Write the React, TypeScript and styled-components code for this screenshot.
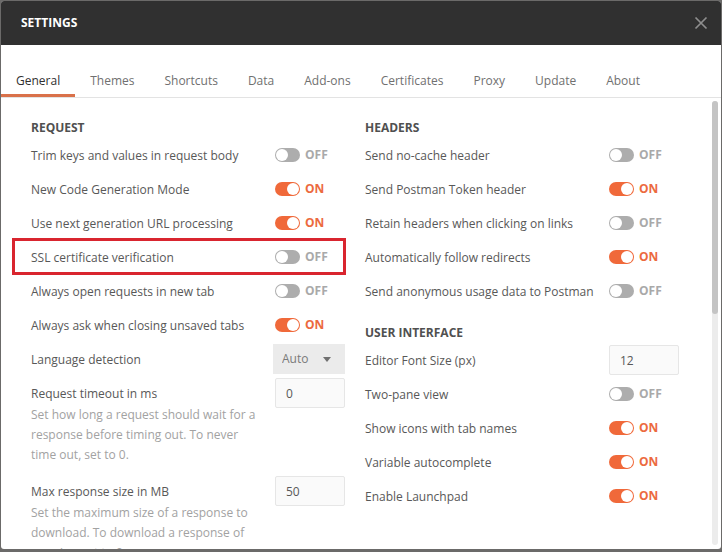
import React, { useId, useState } from "react";
import styled, { createGlobalStyle, css } from "styled-components";

const GlobalStyle = createGlobalStyle`
  *, *::before, *::after { box-sizing: border-box; }
  body {
    margin: 0;
    background: #6b6a69;
    color: #585858;
    font-family: "Open Sans", "Noto Sans", sans-serif;
    font-size: 12px;
    line-height: 20px;
  }
  button, input, select { font: inherit; color: inherit; }
`;

const Backdrop = styled.div`
  display: flex;
  height: 100vh;
  padding: 1px 1px 3px;
`;

const Modal = styled.section`
  display: flex;
  flex: 1;
  flex-direction: column;
  min-width: 0;
  overflow: hidden;
  background: #fff;
  border-radius: 3px;
`;

const ModalHeader = styled.header`
  display: flex;
  flex: none;
  align-items: center;
  justify-content: space-between;
  height: 44px;
  padding: 0 12px 0 20px;
  background: #303030;
`;

const ModalTitle = styled.h1`
  margin: 0;
  color: #fff;
  font-size: 12px;
  font-weight: 700;
`;

const CloseButton = styled.button`
  display: flex;
  padding: 0;
  border: 0;
  background: none;
  color: #8e8e8e;
  cursor: pointer;
`;

const TabBar = styled.nav`
  display: flex;
  flex: none;
  padding-top: 20px;
  border-bottom: 1px solid #e3e3e3;
`;

const Tab = styled.button<{ $active: boolean }>`
  height: 32px;
  padding: 3px 15px 0;
  border: 0;
  border-bottom: 3px solid ${(p) => (p.$active ? "#d9714a" : "transparent")};
  background: none;
  color: ${(p) => (p.$active ? "#303030" : "#707070")};
  cursor: pointer;
`;

const Body = styled.div`
  display: flex;
  flex: 1;
  min-height: 0;
  padding: 3px 3px 4px 0;
`;

const Scroller = styled.div`
  display: grid;
  flex: 1;
  grid-template-columns: 1fr 1fr;
  align-items: start;
  column-gap: 20px;
  height: calc(100% + 4px);
  padding: 17px 33px 0 30px;
  overflow: hidden;
`;

const ScrollTrack = styled.div`
  flex: none;
  width: 6px;
  border-radius: 3px;
  background: #ececec;
`;

const ScrollThumb = styled.div`
  height: 48%;
  border-radius: 3px;
  background: #c4c4c4;
`;

const Column = styled.div`
  display: flex;
  flex-direction: column;
  gap: 15px;
  min-width: 0;
`;

const SectionTitle = styled.h2`
  margin: 0;
  color: #505050;
  font-size: 12px;
  font-weight: 700;
`;

const Row = styled.div<{ $highlighted?: boolean }>`
  position: relative;
  display: grid;
  grid-template-columns: minmax(0, 1fr) 70px;
  align-items: start;
  min-height: 34px;
  ${(p) =>
    p.$highlighted &&
    css`
      &::after {
        content: "";
        position: absolute;
        inset: -2px -1px -1px -19px;
        border: 3px solid #d9252f;
        pointer-events: none;
      }
    `}
`;

const RowText = styled.div`
  padding-top: 8px;
`;

const RowLabel = styled.label`
  display: block;
  white-space: nowrap;
`;

const Description = styled.p`
  margin: 1px 14px 9px 0;
  color: #a2a2a2;
`;

const SwitchCell = styled.div<{ $on: boolean }>`
  display: flex;
  align-items: center;
  gap: 5px;
  height: 34px;
  color: ${(p) => (p.$on ? "#ec6a3e" : "#a9a9a9")};
  font-weight: 700;
`;

const SwitchInput = styled.input`
  display: flex;
  align-items: center;
  width: 25px;
  height: 14px;
  margin: 0;
  padding: 0 1px;
  appearance: none;
  border-radius: 7px;
  background: #adadad;
  cursor: pointer;

  &::before {
    content: "";
    width: 12px;
    height: 12px;
    border-radius: 50%;
    background: #fff;
  }

  &:checked {
    justify-content: flex-end;
    background: #f0693a;
  }
`;

const NumberInput = styled.input`
  width: 100%;
  height: 30px;
  margin-top: 2px;
  padding: 0 10px;
  border: 1px solid #e6e6e6;
  border-radius: 2px;
  background: #fafafa;
`;

const SelectWrap = styled.div`
  position: relative;
  justify-self: end;
  width: 72px;
  margin-top: 2px;
`;

const Select = styled.select`
  display: block;
  width: 100%;
  height: 30px;
  padding: 0 9px;
  appearance: none;
  border: 0;
  border-radius: 0;
  background: #ebebeb;
  color: #7a7a7a;
`;

const Caret = styled.svg`
  position: absolute;
  top: 13px;
  right: 14px;
  pointer-events: none;
`;

type Setting = {
  label: string;
  kind?: "switch" | "number" | "select";
  on?: boolean;
  value?: string;
  description?: string;
  highlighted?: boolean;
};

const requestSettings: Setting[] = [
  { label: "Trim keys and values in request body" },
  { label: "New Code Generation Mode", on: true },
  { label: "Use next generation URL processing", on: true },
  { label: "SSL certificate verification", highlighted: true },
  { label: "Always open requests in new tab" },
  { label: "Always ask when closing unsaved tabs", on: true },
  { label: "Language detection", kind: "select" },
  {
    label: "Request timeout in ms",
    kind: "number",
    value: "0",
    description:
      "Set how long a request should wait for a response before timing out. To never time out, set to 0.",
  },
  {
    label: "Max response size in MB",
    kind: "number",
    value: "50",
    description:
      "Set the maximum size of a response to download. To download a response of any size, set to 0.",
  },
];

const headerSettings: Setting[] = [
  { label: "Send no-cache header" },
  { label: "Send Postman Token header", on: true },
  { label: "Retain headers when clicking on links" },
  { label: "Automatically follow redirects", on: true },
  { label: "Send anonymous usage data to Postman" },
];

const interfaceSettings: Setting[] = [
  { label: "Editor Font Size (px)", kind: "number", value: "12" },
  { label: "Two-pane view" },
  { label: "Show icons with tab names", on: true },
  { label: "Variable autocomplete", on: true },
  { label: "Enable Launchpad", on: true },
];

const tabs = ["General", "Themes", "Shortcuts", "Data", "Add-ons", "Certificates", "Proxy", "Update", "About"];

function SettingRow({ setting }: { setting: Setting }) {
  const id = useId();
  const [on, setOn] = useState(!!setting.on);
  const kind = setting.kind ?? "switch";
  return (
    <Row $highlighted={setting.highlighted}>
      <RowText>
        <RowLabel htmlFor={id}>{setting.label}</RowLabel>
        {setting.description && <Description>{setting.description}</Description>}
      </RowText>
      {kind === "switch" && (
        <SwitchCell $on={on}>
          <SwitchInput
            id={id}
            type="checkbox"
            role="switch"
            checked={on}
            onChange={(e) => setOn(e.target.checked)}
          />
          <span>{on ? "ON" : "OFF"}</span>
        </SwitchCell>
      )}
      {kind === "number" && (
        <NumberInput id={id} type="text" inputMode="numeric" defaultValue={setting.value} />
      )}
      {kind === "select" && (
        <SelectWrap>
          <Select id={id} defaultValue="Auto">
            <option>Auto</option>
            <option>JSON</option>
          </Select>
          <Caret width="8" height="5" viewBox="0 0 8 5" aria-hidden="true">
            <path d="M0 0h8L4 5z" fill="#707070" />
          </Caret>
        </SelectWrap>
      )}
    </Row>
  );
}

function Section({ title, settings }: { title: string; settings: Setting[] }) {
  return (
    <section>
      <SectionTitle>{title}</SectionTitle>
      {settings.map((s) => (
        <SettingRow key={s.label} setting={s} />
      ))}
    </section>
  );
}

export default function App() {
  const [active, setActive] = useState("General");
  return (
    <>
      <GlobalStyle />
      <Backdrop>
        <Modal role="dialog" aria-label="Settings">
          <ModalHeader>
            <ModalTitle>SETTINGS</ModalTitle>
            <CloseButton aria-label="Close">
              <svg width="16" height="16" viewBox="0 0 16 16" fill="none" stroke="currentColor" strokeWidth="1.7">
                <path d="M2.5 2.5l11 11M13.5 2.5l-11 11" />
              </svg>
            </CloseButton>
          </ModalHeader>
          <TabBar>
            {tabs.map((t) => (
              <Tab key={t} $active={t === active} onClick={() => setActive(t)}>
                {t}
              </Tab>
            ))}
          </TabBar>
          <Body>
            <Scroller>
              <Column>
                <Section title="REQUEST" settings={requestSettings} />
              </Column>
              <Column>
                <Section title="HEADERS" settings={headerSettings} />
                <Section title="USER INTERFACE" settings={interfaceSettings} />
              </Column>
            </Scroller>
            <ScrollTrack>
              <ScrollThumb />
            </ScrollTrack>
          </Body>
        </Modal>
      </Backdrop>
    </>
  );
}
